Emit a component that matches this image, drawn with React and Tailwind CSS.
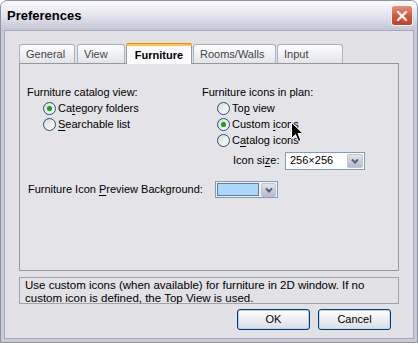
import React from 'react';

const font = { fontFamily: '"Liberation Sans", Arial, sans-serif' };

function Mn({ children }) {
  return <span className="underline underline-offset-[2px]">{children}</span>;
}

function Radio({ checked, children }) {
  return (
    <div className="flex items-center h-[16px]">
      <span className="w-[13px] h-[13px] rounded-full border border-[#1c5180] bg-gradient-to-br from-[#dcdcd5] to-white flex items-center justify-center shrink-0">
        {checked && <span className="w-[5px] h-[5px] rounded-full bg-[#21a121] shadow-[0_0_1px_#5fd45f]" />}
      </span>
      <span className="ml-[2px] text-[11px] text-black leading-none">{children}</span>
    </div>
  );
}

function DropArrow({ className }) {
  return (
    <span className={`flex items-center justify-center rounded-[2px] bg-gradient-to-b from-[#e4e4ea] to-[#b9bac8] border border-[#c3c5d3] ${className}`}>
      <svg width="8" height="6" viewBox="0 0 8 6">
        <path d="M1 1.5 L4 4.5 L7 1.5" stroke="#4d6185" strokeWidth="2" fill="none" />
      </svg>
    </span>
  );
}

function Tab({ label, w, selected, ml }) {
  if (selected) {
    return (
      <div className={`${w} ${ml} h-[21px] -mb-px relative z-10 bg-[#fcfcfe] border border-b-0 border-[#919b9c] rounded-t-[3px] flex items-center justify-center text-[11px] font-bold text-black`}>
        <span className="absolute -top-px -left-px -right-px h-[3px] rounded-t-[3px] bg-[#ffc83c] border-t border-[#e68b2c]" />
        <span className="mt-[2px]">{label}</span>
      </div>
    );
  }
  return (
    <div className={`${w} ${ml} h-[19px] bg-gradient-to-b from-white to-[#e3e4ea] border border-b-0 border-[#a9b3c4] rounded-t-[3px] flex items-center pl-[6px] text-[11px] text-[#444]`}>
      {label}
    </div>
  );
}

function Cursor() {
  return (
    <svg className="absolute left-[291px] top-[122px]" width="13" height="21" viewBox="0 0 13 21">
      <path d="M0.5 0.5 L0.5 16.5 L4.5 12.5 L7.5 19.5 L10 18.5 L7 11.5 L12 11.5 Z" fill="#000" stroke="#fff" strokeWidth="1" />
    </svg>
  );
}

export default function App() {
  return (
    <div className="w-[418px] h-[345px] bg-white relative overflow-hidden" style={font}>
      <div className="w-[418px] h-[343px] rounded-t-[7px] border border-[#8f92a3] bg-[#c9cad8] flex flex-col">
        {/* title bar */}
        <div className="h-[29px] shrink-0 rounded-t-[6px] bg-gradient-to-b from-[#fbfbfd] via-[#e3e4ec] to-[#c4c5d4] flex items-center justify-between pl-[6px] pr-[4px]">
          <span className="text-[13px] font-bold text-black">Preferences</span>
          <div className="w-[22px] h-[21px] rounded-[3px] border border-white bg-gradient-to-b from-[#e88f7c] via-[#d45a40] to-[#c1402a] flex items-center justify-center">
            <svg width="12" height="12" viewBox="0 0 12 12">
              <path d="M2 2 L10 10 M10 2 L2 10" stroke="#fff" strokeWidth="2.4" strokeLinecap="round" />
            </svg>
          </div>
        </div>
        {/* body */}
        <div className="flex-1 mx-[3px] mb-[3px] border border-[#a6a8b8] bg-[#e2e1e5] pl-[14px] pr-[14px] pt-[11px]">
          <div className="flex items-end h-[21px]">
            <Tab label="General" w="w-[56px]" />
            <Tab label="View" w="w-[48px]" ml="ml-[2px]" />
            <Tab label="Furniture" w="w-[66px]" ml="ml-[1px]" selected />
            <Tab label="Rooms/Walls" w="w-[83px]" ml="ml-[1px]" />
            <Tab label="Input" w="w-[66px]" ml="ml-px" />
          </div>
          {/* panel */}
          <div className="h-[208px] border border-[#919b9c] bg-[#e4e3e7] pt-[20px] text-[11px] text-black">
            <div className="flex">
              <div className="w-[182px] pl-[7px]">
                <div className="h-[16px] flex items-center">Furniture catalog view:</div>
                <div className="pl-[16px]">
                  <Radio checked>Ca<Mn>t</Mn>egory folders</Radio>
                  <Radio><Mn>S</Mn>earchable list</Radio>
                </div>
              </div>
              <div>
                <div className="h-[16px] flex items-center">Furniture icons in plan:</div>
                <div className="pl-[15px]">
                  <Radio>To<Mn>p</Mn> view</Radio>
                  <Radio checked>Custom <Mn>i</Mn>cons</Radio>
                  <Radio>C<Mn>a</Mn>talog icons</Radio>
                </div>
                <div className="flex items-center mt-[4px] pl-[31px] h-[17px]">
                  <span className="w-[52px]">Icon si<Mn>z</Mn>e:</span>
                  <div className="w-[80px] h-[18px] border border-[#7f9db9] bg-white flex items-center justify-between pl-[4px] pr-px">
                    <span>256×256</span>
                    <DropArrow className="w-[16px] h-[14px]" />
                  </div>
                </div>
              </div>
            </div>
            <div className="flex items-center mt-[12px] pl-[8px] h-[17px]">
              <span className="w-[187px]">Furniture Icon <Mn>P</Mn>review Background:</span>
              <div className="w-[63px] h-[17px] border border-[#7f9db9] bg-[#f2f2f4] flex items-center px-px gap-[2px]">
                <span className="w-[42px] h-[13px] bg-[#a8d8ff] border border-[#6a7a8a]" />
                <DropArrow className="w-[15px] h-[14px]" />
              </div>
            </div>
          </div>
          {/* status */}
          <div className="mt-[6px] h-[27px] border border-[#a3a3ab] px-[5px] text-[11.5px] leading-[13px] text-black pt-px">
            Use custom icons (when available) for furniture in 2D window. If no<br />custom icon is defined, the Top View is used.
          </div>
          {/* buttons */}
          <div className="flex justify-end gap-[8px] mt-[5px] pr-[8px]">
            <button className="w-[73px] h-[21px] rounded-[3px] border border-[#003c74] bg-gradient-to-b from-white to-[#dcdce4] shadow-[inset_0_0_0_1px_#b8cdef] text-[11px] text-black">OK</button>
            <button className="w-[73px] h-[21px] rounded-[3px] border border-[#003c74] bg-gradient-to-b from-white to-[#dcdce4] shadow-[inset_0_0_0_1px_#c8d5ee] text-[11px] text-black">Cancel</button>
          </div>
        </div>
      </div>
      <Cursor />
    </div>
  );
}
